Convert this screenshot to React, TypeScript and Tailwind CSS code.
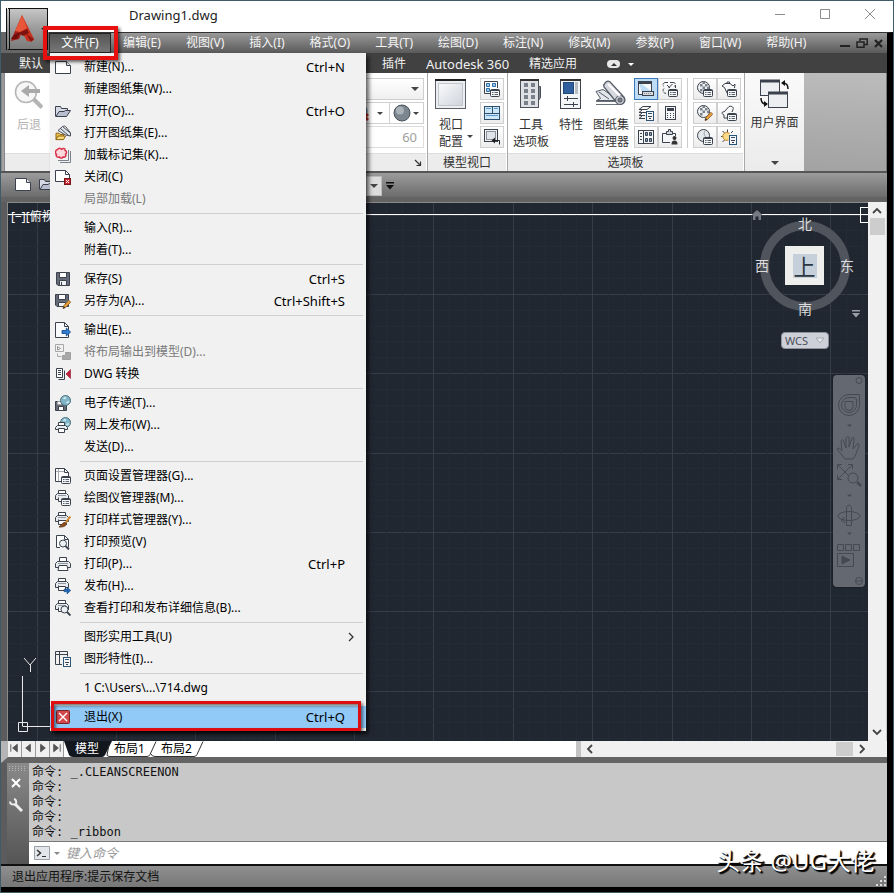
import React from 'react';

type IconProps = { className?: string };

interface SvgProps extends IconProps {
  size?: number;
  children: React.ReactNode;
}

const Svg: React.FC<SvgProps> = ({ size = 16, className = '', children }) => (
  <svg
    viewBox={`0 0 ${size} ${size}`}
    width={size}
    height={size}
    fill="none"
    stroke="#3b424d"
    strokeWidth="1"
    className={`shrink-0 ${className}`}
    aria-hidden="true"
  >
    {children}
  </svg>
);

/* small pieces shared by several icons */

const ListBadge = () => (
  <g>
    <rect x="6.5" y="8.5" width="9" height="7" rx="1" fill="#f4f6f8" />
    <path d="M6.500 9.500h9" />
    <path d="M8 11.500h1.500M10.500 11.500h3.500M8 13.500h1.500M10.500 13.500h3.500" stroke="#5b6470" />
  </g>
);

const CalcBadge = () => (
  <g>
    <rect x="8.500" y="6.500" width="7" height="9" fill="#f4f6f8" stroke="#2d5578" />
    <path d="M10 8.500h4" stroke="#2d5578" />
    <path d="M10 11.500h4M11 13.500h2" />
  </g>
);

const Pencil = () => (
  <g>
    <path d="M13.800 7.300l1.900 1.900-5.300 5.400-2.400.9.700-2.700z" fill="#eda43c" stroke="#8a5a22" strokeWidth="0.9" />
    <path d="M8 15.500l.7-2.600 1.700 1.800z" fill="#333" stroke="none" />
  </g>
);

const PrinterBody = () => (
  <g>
    <path d="M4.500 5.500v-4h7v4" fill="#fff" />
    <path d="M2.500 5.500h11l2 2v4H.5v-4z" fill="#e9ecef" />
    <path d="M3 7.500h10" stroke="#9298a2" />
    <path d="M4 9.500h8l1 5H3z" fill="#fff" />
  </g>
);

const SmallPrinter = () => (
  <g>
    <path d="M3.500 3.500v-3h7v3" fill="#fff" />
    <path d="M2.500 3.500h9l2 2v4H.5v-4z" fill="#e9ecef" />
    <path d="M3 5.500h8" stroke="#9298a2" />
    <path d="M3.500 7.500v4h5" fill="#fff" />
  </g>
);

const Globe = ({ cx, cy, r }: { cx: number; cy: number; r: number }) => (
  <g>
    <circle cx={cx} cy={cy} r={r} fill="#7fb4c6" stroke="#4d6f7c" />
    <path d={`M${cx - 3} ${cy - 2}l2-2 2 1-1 2zM${cx} ${cy + 2}l3-2 1 2-2 1z`} fill="#c5e3ea" stroke="none" />
  </g>
);

/* file menu icons */

const NewIcon = () => (
  <Svg>
    <path d="M.5 2.500h11l4 4v8H.5z" fill="#fff" />
    <path d="M11.500 2.500v4h4" fill="#dfe3e8" />
  </Svg>
);

const OpenIcon = () => (
  <Svg>
    <path d="M.5 13.500v-10h5l1 2h6v3" fill="#d6dae4" />
    <path d="M1 13.500l3-5h5l1.500-1h5l-4 6z" fill="#b9bfce" />
  </Svg>
);

const OpenSetIcon = () => (
  <Svg>
    <path d="M3 5.500l4.500-4 8 6.500v3l-5-1z" fill="#dfe4ea" strokeWidth="0.9" />
    <path d="M5.500 3.500l8 7M8 1.500c1-.8 2-.5 3 .5l4.500 6" strokeWidth="0.9" />
    <path d="M1 14.500V8.200h3l1 1.200h3.500v1.600" fill="#f3c64b" stroke="#8b6214" />
    <path d="M1 14.600l2-3.600h7.500l-2 3.600z" fill="#fbdc78" stroke="#8b6214" />
  </Svg>
);

const MarkupIcon = () => (
  <Svg>
    <path d="M5 15.500h10.500V4M3 13.500h10.500V3" stroke="#7b808a" />
    <path
      d="M2.500 2.500c1.500-2 3-1.500 4-.2 1.400-1.500 3.800-1 3.600 1.200 2 .5 1.600 3 .4 3.700 1 1.700-.4 3.500-2.400 2.800-1 1.600-3 1.400-3.600 0C2.500 10.700.500 9.500 1.500 7.500 0 6.800 0 3 2.500 2.500z"
      fill="#fbd8dc"
      stroke="#d9324a"
      strokeWidth="1.5"
    />
  </Svg>
);

const CloseFileIcon = () => (
  <Svg>
    <path d="M9 12.500H.5v-11h10l4 4V9" fill="#fff" />
    <path d="M10.500 1.500v4h4" />
    <rect x="9.500" y="9.500" width="6" height="6" fill="#c02a30" stroke="#7a1519" />
    <path d="M11 11l3 3M14 11l-3 3" stroke="#fff" />
  </Svg>
);

const SaveIcon = () => (
  <Svg>
    <path d="M1.500 1.500h13v13H3L1.500 13z" fill="#646b76" />
    <path d="M4.500 1.500h7v5h-7z" fill="#fff" />
    <path d="M4.500 9.500h7v5h-7z" fill="#eef0f2" />
    <path d="M6.500 11v3" />
  </Svg>
);

const SaveAsIcon = () => (
  <Svg>
    <path d="M.5 1.500h13v12H2L.5 12z" fill="#646b76" />
    <path d="M3.500 1.500h7v5h-7z" fill="#fff" />
    <path d="M3.500 9.500h7v4h-7z" fill="#eef0f2" />
    <Pencil />
  </Svg>
);

const ExportIcon = () => (
  <Svg>
    <path d="M.5.5h9l4 4v11H.5z" fill="#f8fafc" />
    <path d="M9.500.5v4h4" />
    <path d="M7 8.500h4.300V6l4.300 4-4.300 4v-2.500H7z" fill="#2d7dd2" stroke="#1d4e8f" strokeWidth="0.9" />
  </Svg>
);

const LayoutExportIcon = () => (
  <Svg>
    <path d="M.5.500h8v7h-8z" stroke="#a8a8a8" />
    <path d="M2.500 2.500l3 2-3 1.500z" stroke="#999" />
    <path d="M2.500 9.500v3h4" stroke="#a8a8a8" />
    <path d="M10.500 8.500h5v7h-8v-4h3z" fill="#a9a9a9" stroke="#a0a0a0" />
  </Svg>
);

const DwgIcon = () => (
  <Svg>
    <path d="M1.500 2.500h6v9h-6z" fill="#fff" />
    <path d="M3 4.500h3M3 6.500h3M3 8.500h3" />
    <path d="M3.500 13.500h6v-9" />
    <path d="M15.500 3.500v9l-4.500-4.500z" fill="#c3203d" stroke="#8b1b30" strokeWidth="0.6" />
  </Svg>
);

const TransmitIcon = () => (
  <Svg>
    <path d="M.5 6.500h11v9H.5z" fill="#656c77" />
    <path d="M2.500 6.500h4v3h-4z" fill="#f5f5f5" stroke="none" />
    <path d="M3.500 11.500h5v4h-5z" fill="#fff" />
    <Globe cx={10.5} cy={5.5} r={5} />
  </Svg>
);

const WebPublishIcon = () => (
  <Svg>
    <Globe cx={10.5} cy={5.500} r={5} />
    <path d="M3.500 8.500v-3h6v3" fill="#fff" />
    <path d="M2.500 8.500h8l2 2v2H.5v-2z" fill="#e9ecef" />
    <path d="M3.500 11.500h6v4h-6z" fill="#fff" />
  </Svg>
);

const PageSetupIcon = () => (
  <Svg>
    <path d="M6 13.500H.5V.5h9l4 4V8" fill="#fff" />
    <path d="M9.500.5v4h4" />
    <path d="M3.500 1v12M1 3.500h8" stroke="#a6abb3" />
    <ListBadge />
  </Svg>
);

const PlotterIcon = () => (
  <Svg>
    <SmallPrinter />
    <ListBadge />
  </Svg>
);

const PlotStyleIcon = () => (
  <Svg>
    <SmallPrinter />
    <path d="M3.500 8.500h8v4h-8z" fill="#fff" />
    <path d="M15.300 4.500l-5 6.500" stroke="#d98b2c" strokeWidth="2" />
    <path d="M9.800 10.300c-2 .2-3 2.200-5.800 4.800 3.500 0 6.800-.5 7.400-3z" fill="#8a4f22" stroke="#5c3314" strokeWidth="0.8" />
  </Svg>
);

const PreviewIcon = () => (
  <Svg>
    <path d="M5 13.500H1.500v-12h8l4 4v8" fill="#fff" />
    <path d="M9.500 1.500v4h4" />
    <circle cx="8" cy="9.500" r="3.500" fill="#eef1f4" />
    <path d="M10.500 12l3.500 3.500" strokeWidth="1.8" />
  </Svg>
);

const PrintIcon = () => (
  <Svg>
    <PrinterBody />
  </Svg>
);

const PublishIcon = () => (
  <Svg>
    <SmallPrinter />
    <path d="M3.500 8.500h7v4h-7z" fill="#fff" />
    <path d="M9 11.300h3V9l3.700 3.500L12 16v-2.300H9z" fill="#1f66b5" stroke="#17497f" strokeWidth="0.6" />
  </Svg>
);

const PlotDetailIcon = () => (
  <Svg>
    <SmallPrinter />
    <circle cx="9.500" cy="9.500" r="3.500" fill="#eef1f4" />
    <path d="M12 12l3.500 3.500" strokeWidth="1.8" />
  </Svg>
);

const DrawingPropsIcon = () => (
  <Svg>
    <path d="M7 13.500H.5v-13h12v5M.5 3.500h12M4.500.500v13" />
    <CalcBadge />
  </Svg>
);

const ExitIcon = () => (
  <Svg>
    <rect x="1.500" y="1.500" width="13" height="13" rx="1" fill="#d2484b" stroke="#7d2427" />
    <path d="M4 4l8 8M12 4l-8 8" stroke="#fff" strokeWidth="1.4" />
  </Svg>
);

/* ribbon icons */

const BackIcon = () => (
  <svg viewBox="0 0 32 32" width="32" height="32" fill="none" stroke="#b4b4b4" className="shrink-0" aria-hidden="true">
    <circle cx="13" cy="14" r="10.5" strokeWidth="1.5" fill="#f6f6f6" />
    <path d="M8 13l8-6v4h11v4H16v4z" fill="#a9a9a9" stroke="none" />
    <path d="M20.500 21l8.500 8.500" strokeWidth="4" />
  </svg>
);

const ViewportIcon = () => (
  <svg viewBox="0 0 32 32" width="32" height="32" aria-hidden="true">
    <defs>
      <linearGradient id="pane" x1="0" y1="0" x2="1" y2="1">
        <stop offset="0" stopColor="#fafbfc" />
        <stop offset="1" stopColor="#cfd3da" />
      </linearGradient>
    </defs>
    <rect x=".5" y="1.500" width="30" height="29" fill="#eceef1" stroke="#5b6069" />
    <path d="M0 2h31" stroke="#222" strokeWidth="2" />
    <rect x="3.500" y="5.500" width="24" height="22" fill="url(#pane)" stroke="#c3c7ce" />
  </svg>
);

const ToolPaletteIcon = () => (
  <svg viewBox="0 0 32 32" width="32" height="32" aria-hidden="true">
    <rect x="5.500" y="1.500" width="18" height="28" fill="#dfe1e5" stroke="#4b5059" />
    <path d="M5 2h19" stroke="#333" strokeWidth="2" />
    <path d="M23.500 8.500h2v11l-2 3z" fill="#7d838d" stroke="#4b5059" />
    {[5, 11, 17, 23].map((y) => (
      <g key={y} fill="#7a808a">
        <rect x="9" y={y} width="4" height="4" />
        <rect x="16" y={y} width="4" height="4" />
      </g>
    ))}
  </svg>
);

const PropertiesIcon = () => (
  <svg viewBox="0 0 32 32" width="32" height="32" aria-hidden="true">
    <rect x="5.500" y="1.500" width="20" height="29" fill="#f4f6f8" stroke="#3b424d" />
    <path d="M5 2h21" stroke="#333" strokeWidth="2" />
    <rect x="8.500" y="4.500" width="10" height="11" fill="#2f5f9e" stroke="#23487a" />
    <rect x="20" y="4" width="3" height="12" fill="#b9bec6" />
    <path d="M9 20.500h14M9 26.500h14M12.500 18v5M18.500 24v5" stroke="#3b424d" />
  </svg>
);

const SheetSetIcon = () => (
  <svg viewBox="0 0 32 32" width="32" height="32" fill="none" stroke="#555b66" aria-hidden="true">
    <path d="M1 26.500h23M1 23.500h22" stroke="#6c727c" />
    <path d="M1 13.500l7-2 16 11H1.500l4-2z" fill="#e4e7eb" />
    <path d="M4 14l10 7" />
    <path d="M10 5c2-3 5-2 6 0l13 14c3 6-3 9-7 6L9 9c-1-2 0-3 1-4z" fill="#d5d9df" strokeWidth="1.3" />
    <circle cx="25" cy="22" r="4.5" fill="#bfc4cc" />
    <circle cx="25" cy="22" r="2" fill="#7c828c" />
    <path d="M13 6l12 12" stroke="#fff" strokeWidth="2" />
  </svg>
);

const UserInterfaceIcon = () => (
  <svg viewBox="0 0 32 32" width="32" height="32" fill="none" aria-hidden="true">
    <g stroke="#3b424d">
      <rect x="1.500" y="2.500" width="19" height="15" fill="#eceef2" />
      <path d="M1 3h20" strokeWidth="3" />
      <rect x="9.500" y="14.500" width="19" height="15" fill="#eceef2" />
      <path d="M9 15h20" strokeWidth="3" />
    </g>
    <g stroke="#111" strokeWidth="1.5">
      <path d="M29 11c0-4-2-6-5-6" />
      <path d="M2 20c0 4 2 6 5 6" />
    </g>
    <path d="M22 5l4-3v6zM9 26l-4-3v6z" fill="#111" />
  </svg>
);

const AcadIcon = () => (
  <svg viewBox="0 0 26 28" width="26" height="28" className="shrink-0" aria-hidden="true">
    <path d="M12 0L2 23l-1 3 8-2 3-7z" fill="#a11d16" />
    <path d="M12 0l3 6 9 18c0 2-3 3-7 2l-5-9z" fill="#c8301d" />
    <path d="M12 0l5 13-7 4-5-1z" fill="#e8563a" />
    <path d="M9 18l8-4 2 4-6 3z" fill="#7c110e" />
    <path d="M1 24c3-5 6-6 9-6l-3 6z" fill="#6e0f0c" />
    <path d="M16 19l8 5-3 3z" fill="#8e1812" />
  </svg>
);

const ViewManagerSm = () => (
  <Svg>
    <path d="M6 12.500H.5V.5h13V7" fill="#fff" />
    <path d="M2.500 2.500h3v3h-3zM8.500 2.500h3v3h-3zM2.500 7.500h3v3h-3z" fill="#9ecbee" stroke="#2d6ea8" />
    <ListBadge />
  </Svg>
);

const ViewportSplitSm = () => (
  <Svg>
    <rect x=".5" y="1.500" width="15" height="13" fill="#cfe6f7" stroke="#2d4f6c" />
    <path d="M1 8.500h14M8.500 2v6" stroke="#2d4f6c" />
    <path d="M2 3.500h5M10 3.500h4M2 10.500h12" stroke="#5b9bd0" />
  </Svg>
);

const RestoreSm = () => (
  <Svg>
    <rect x=".5" y=".5" width="13" height="12" fill="#f0f1f3" />
    <rect x="2.500" y="2.500" width="9" height="8" fill="#e0e3e7" stroke="#8c929c" />
    <path d="M15.500 15.500v-4H8.500" stroke="#222" />
    <path d="M11 8.500l-3.500 3 3.500 3z" fill="#222" stroke="none" />
  </Svg>
);

const CommandLineSm = () => (
  <Svg>
    <path d="M.5.5h13v10M.5.5v13h4" fill="#f5f7f9" />
    <path d="M0 1.500h14" strokeWidth="3" />
    <rect x="4.500" y="10.500" width="11" height="4" fill="#d8dbe0" />
    <path d="M6 12.500h8" stroke="#858b95" strokeDasharray="1 1" />
  </Svg>
);

const CloudListSm = () => (
  <Svg>
    <path d="M3 1.500h3M8 1.500h3M13.500 4v3M6.500 7l4-4M5 4l3 3" />
    <path d="M3 1.500C0 2.500 1 5 2 5.500M11 1.500c3 0 3 3 1.500 4M2 7.500c-2 2-1 5 3 5" strokeDasharray="3 1" />
    <ListBadge />
  </Svg>
);

const LayerSm = () => (
  <Svg>
    <path d="M5 1.500h8l-4 3H1zM8 7.500H1l3-2.500M7 10.500H1l3-2.500M7 13.500H1l3-2.500" />
    <CalcBadge />
  </Svg>
);

const CalculatorSm = () => (
  <Svg>
    <rect x="3.500" y="1.500" width="10" height="13" fill="#f4f6f8" />
    <rect x="5" y="3" width="7" height="3" fill="#3b424d" stroke="none" />
    <path d="M5 8.500h7M5 10.500h7M5 12.500h7" strokeDasharray="1 2" />
  </Svg>
);

const DesignCenterSm = () => (
  <Svg>
    <rect x=".5" y="1.500" width="15" height="13" fill="#f4f6f8" />
    <path d="M5.500 1.500v13M2 4.500h2M2 7.500h2M2 10.500h2" />
    <path d="M7.500 3.500h2v3h-2zM11.500 3.500h2v3h-2zM7.500 9.500h2v3h-2zM11.500 9.500h2v3h-2z" fill="#77a2c8" />
  </Svg>
);

const ClipboardUserSm = () => (
  <Svg>
    <path d="M8 13.500H.5v-9h13V7" fill="#f4f6f8" />
    <path d="M4.500 5.500v-3h2v-2h2v2h2v3z" fill="#d2d5da" />
    <circle cx="12.500" cy="9" r="2" fill="#333" stroke="none" />
    <path d="M9.500 15.500c0-3 1-4 3-4s3 1 3 4z" fill="#333" stroke="none" />
  </Svg>
);

const Sphere = () => (
  <g>
    <circle cx="6.500" cy="6.500" r="6" fill="#eef0f2" />
    <path d="M3 3h2.500v2.500H3zM8 3h2.500v2.500H8zM5.500 5.500H8V8H5.500zM3 8h2.500v2.500H3zM10 6h2v2h-2zM5.500 1H8v2H5.500z" fill="#7b828c" stroke="none" />
  </g>
);

const MaterialListSm = () => (
  <Svg>
    <Sphere />
    <ListBadge />
  </Svg>
);

const MaterialEditSm = () => (
  <Svg>
    <Sphere />
    <Pencil />
  </Svg>
);

const RenderSettingsSm = () => (
  <Svg>
    <circle cx="6.500" cy="6.500" r="6" fill="#e4e7ea" />
    <path d="M9 1c-4 3-1 8 3 8" stroke="#9da3ac" />
    <ListBadge />
  </Svg>
);

const VisualStyleSm = () => (
  <Svg>
    <path d="M6 12L3.500 6.500 1 5l3-2.500h5L12 5l2-2-.5 4M6 2.500V1h2.500v1.500" />
    <ListBadge />
  </Svg>
);

const CameraSm = () => (
  <Svg>
    <path d="M3 10C0 9 1 6 3 7l5-5.500c3-1 5 1 4 3L11 7M3 10v3h3" />
    <ListBadge />
  </Svg>
);

const SunSm = () => (
  <Svg>
    <path d="M6.500 3V.5M3.500 4l-2-2M2.500 7.500H0M3.500 11l-2 2M10 4l2-2" stroke="#444" />
    <path d="M7.500 11A4 4 0 118.500 4.500" fill="#f9d98c" stroke="#c7892a" />
    <CalcBadge />
  </Svg>
);

const Caret = ({ className = 'border-t-[#444]' }: IconProps) => (
  <span className={`inline-block h-0 w-0 border-x-[4px] border-t-[4px] border-x-transparent ${className}`} />
);

const CaretSm = ({ className = 'border-t-[#444]' }: IconProps) => (
  <span className={`inline-block h-0 w-0 border-x-[3px] border-t-[3px] border-x-transparent ${className}`} />
);

/* menu data */

interface MenuEntry {
  label: string;
  icon?: React.FC;
  shortcut?: string;
  disabled?: boolean;
  submenu?: boolean;
  active?: boolean;
}

const FILE_MENU: MenuEntry[][] = [
  [
    { label: '新建(N)...', icon: NewIcon, shortcut: 'Ctrl+N' },
    { label: '新建图纸集(W)...' },
    { label: '打开(O)...', icon: OpenIcon, shortcut: 'Ctrl+O' },
    { label: '打开图纸集(E)...', icon: OpenSetIcon },
    { label: '加载标记集(K)...', icon: MarkupIcon },
    { label: '关闭(C)', icon: CloseFileIcon },
    { label: '局部加载(L)', disabled: true },
  ],
  [{ label: '输入(R)...' }, { label: '附着(T)...' }],
  [
    { label: '保存(S)', icon: SaveIcon, shortcut: 'Ctrl+S' },
    { label: '另存为(A)...', icon: SaveAsIcon, shortcut: 'Ctrl+Shift+S' },
  ],
  [
    { label: '输出(E)...', icon: ExportIcon },
    { label: '将布局输出到模型(D)...', icon: LayoutExportIcon, disabled: true },
    { label: 'DWG 转换', icon: DwgIcon },
  ],
  [
    { label: '电子传递(T)...', icon: TransmitIcon },
    { label: '网上发布(W)...', icon: WebPublishIcon },
    { label: '发送(D)...' },
  ],
  [
    { label: '页面设置管理器(G)...', icon: PageSetupIcon },
    { label: '绘图仪管理器(M)...', icon: PlotterIcon },
    { label: '打印样式管理器(Y)...', icon: PlotStyleIcon },
    { label: '打印预览(V)', icon: PreviewIcon },
    { label: '打印(P)...', icon: PrintIcon, shortcut: 'Ctrl+P' },
    { label: '发布(H)...', icon: PublishIcon },
    { label: '查看打印和发布详细信息(B)...', icon: PlotDetailIcon },
  ],
  [
    { label: '图形实用工具(U)', submenu: true },
    { label: '图形特性(I)...', icon: DrawingPropsIcon },
  ],
  [{ label: '1 C:\\Users\\...\\714.dwg' }],
  [{ label: '退出(X)', icon: ExitIcon, shortcut: 'Ctrl+Q', active: true }],
];

const MENUS = ['编辑(E)', '视图(V)', '插入(I)', '格式(O)', '工具(T)', '绘图(D)', '标注(N)', '修改(M)', '参数(P)', '窗口(W)', '帮助(H)'];

const FileMenu = () => (
  <div className="absolute left-px top-full z-20 w-[316px] bg-[#f1f1f1] py-[3px] text-black shadow-[3px_3px_4px_rgba(0,0,0,0.6)]">
    {FILE_MENU.map((group, i) => (
      <React.Fragment key={i}>
        {i > 0 && i < FILE_MENU.length - 1 && (
          <div className="flex h-[7px] items-center pl-[30px] pr-[3px]">
            <div className="h-px w-full bg-[#d0d0d0]" />
          </div>
        )}
        {i === FILE_MENU.length - 1 && <div className="h-[7px]" />}
        {group.map(({ label, icon: Icon, shortcut, disabled, submenu, active }) => (
          <button
            key={label}
            disabled={disabled}
            className={`relative flex h-[22px] w-full items-center pl-[5px] text-left ${
              active ? 'bg-[#91c9f7]' : ''
            } ${disabled ? 'text-[#7a7a7a]' : ''} ${submenu || shortcut ? 'pr-[21px]' : 'pr-2'}`}
          >
            <span className="flex w-[29px] shrink-0">{Icon && <Icon />}</span>
            <span className="flex-1 whitespace-nowrap">{label}</span>
            {shortcut && <span className="text-[13px]">{shortcut}</span>}
            {submenu && (
              <svg viewBox="0 0 8 10" width="8" height="10" fill="none" stroke="#333" strokeWidth="1.3" className="-mr-2.5" aria-hidden="true">
                <path d="M2 1l4 4-4 4" />
              </svg>
            )}
            {active && (
              <span className="absolute -bottom-[3px] -top-[5px] left-px right-[5px] border-[3px] border-[#dd0e12] shadow-[2px_2px_3px_rgba(0,0,0,0.5),inset_2px_2px_3px_rgba(0,0,0,0.5)]" />
            )}
          </button>
        ))}
      </React.Fragment>
    ))}
  </div>
);

const TitleBar = () => (
  <div className="flex h-[31px] items-center bg-white pl-20">
    <h1 className="flex-1 pb-1 text-[13px] text-[#222]">Drawing1.dwg</h1>
    <div className="flex gap-[21px] pb-1.5 pr-[11px]">
      <button aria-label="最小化" className="flex w-6 justify-center">
        <svg viewBox="0 0 12 12" width="12" height="12" fill="none" stroke="#8c8c8c">
          <path d="M1 6.500h10" />
        </svg>
      </button>
      <button aria-label="最大化" className="flex w-6 justify-center">
        <svg viewBox="0 0 12 12" width="12" height="12" fill="none" stroke="#8c8c8c">
          <path d="M1.500 1.500h9v9h-9z" />
        </svg>
      </button>
      <button aria-label="关闭" className="flex w-6 justify-center">
        <svg viewBox="0 0 12 12" width="12" height="12" fill="none" stroke="#8c8c8c">
          <path d="M1 1l10 10M11 1L1 11" />
        </svg>
      </button>
    </div>
  </div>
);

const MenuBar = () => (
  <nav className="flex h-[21px] items-stretch border-r-[6px] border-t border-black border-t-[#333] bg-gradient-to-b from-[#9a9a9a] to-[#5a5a5a] text-[#f4f4f4]">
    <div className="relative mr-3">
      <button className="h-full w-[62px] border border-[#222] bg-gradient-to-b from-[#555] to-[#777] text-white">文件(F)</button>
      <FileMenu />
      <span className="absolute -bottom-[7px] -left-1.5 -right-[7px] -top-[7px] z-30 border-4 border-[#e80f0f] shadow-[2px_2px_3px_rgba(0,0,0,0.6)]" />
    </div>
    <div className="flex flex-1 gap-[25px]">
      {MENUS.map((m) => (
        <button key={m} className="whitespace-nowrap">
          {m}
        </button>
      ))}
    </div>
    <div className="flex items-center gap-1.5 pr-1">
      <svg viewBox="0 0 10 10" width="10" height="10" aria-hidden="true">
        <path d="M0 7h10v2H0z" fill="#222" />
      </svg>
      <svg viewBox="0 0 12 10" width="12" height="10" fill="none" stroke="#222" strokeWidth="1.5" aria-hidden="true">
        <path d="M4 3V1h7.200v5.500H8M1 4h7v5.200H1z" />
      </svg>
      <svg viewBox="0 0 9 9" width="9" height="9" stroke="#222" strokeWidth="2.2" aria-hidden="true">
        <path d="M1 1l7 7M8 1L1 8" />
      </svg>
    </div>
  </nav>
);

const Header = () => (
  <header className="flex">
    <div className="flex w-12 shrink-0 flex-col bg-gradient-to-b from-white from-60% to-[#666] to-60% pl-[5px] pr-px pt-[7px]">
      <button
        aria-label="应用程序菜单"
        className="flex h-[42px] items-center justify-between border border-l-4 border-double border-[#111] bg-gradient-to-b from-[#c6c6c6] via-[#9a9a9a] to-[#7b7b7b]"
      >
        <AcadIcon />
        <CaretSm className="border-t-[#222]" />
      </button>
    </div>
    <div className="min-w-0 flex-1">
      <TitleBar />
      <MenuBar />
    </div>
  </header>
);

const RibbonTabs = () => (
  <div className="flex h-5 items-center gap-5 bg-[#414141] pt-0.5 text-[#f0f0f0]">
    <button className="w-[361px] pl-[18px] text-left">默认</button>
    <button>插件</button>
    <button className="whitespace-nowrap text-[13px]">Autodesk 360</button>
    <button>精选应用</button>
    <button aria-label="最小化功能区" className="ml-2.5 flex items-center gap-2">
      <span className="flex h-2 w-[13px] items-center justify-center rounded-sm bg-[#e8e8e8]">
        <span className="h-0 w-0 border-x-[3px] border-b-[3px] border-x-transparent border-b-[#333]" />
      </span>
      <CaretSm className="border-t-white" />
    </button>
  </div>
);

interface PanelProps {
  title?: React.ReactNode;
  className?: string;
  children: React.ReactNode;
}

const Panel: React.FC<PanelProps> = ({ title, className = '', children }) => (
  <section className={`flex flex-col border-r border-[#a9a9a9] bg-white ${className}`}>
    <div className="flex h-20 px-[3px] pt-[5px]">{children}</div>
    <div className="mr-px flex h-[18px] items-center justify-center border-t border-[#ddd] bg-[#ececec] text-[#333]">{title}</div>
  </section>
);

const SmallButton: React.FC<{ icon: React.FC; active?: boolean }> = ({ icon: Icon, active }) => (
  <button
    className={`flex h-[22px] w-6 items-center justify-center border ${
      active ? 'border-[#3a78c0] bg-[#bfdcf6]' : 'border-[#cfcfcf] bg-gradient-to-b from-white to-[#ececec]'
    }`}
  >
    <Icon />
  </button>
);

const BigButton: React.FC<{ icon: React.FC; lines: string[]; caret?: boolean }> = ({ icon: Icon, lines, caret }) => (
  <button className="relative flex w-10 flex-col items-center whitespace-nowrap leading-[17px] text-[#333]">
    <Icon />
    <span className="pt-1.5">
      {lines.map((l) => (
        <span key={l} className="block">
          {l}
        </span>
      ))}
    </span>
    {caret && <CaretSm className="absolute -right-0.5 bottom-[15px] border-t-[#444]" />}
  </button>
);

const Ribbon = () => (
  <div className="flex h-[98px] border-l-4 border-double border-[#888] bg-gradient-to-br from-[#8c8c8c] to-[#a4a4a4]">
    <Panel
      className="w-[423px]"
      title={
        <svg viewBox="0 0 8 8" width="8" height="8" fill="none" stroke="#333" strokeWidth="1.2" className="ml-auto mr-1" aria-hidden="true">
          <path d="M1 1l5 5M6.500 2.500v4h-4" />
        </svg>
      }
    >
      <button disabled className="ml-[5px] flex w-8 flex-col items-center gap-[7px] text-[#b4b4b4]">
        <BackIcon />
        <span>后退</span>
      </button>
      <div className="ml-auto flex w-[120px] flex-col gap-0.5">
        <button aria-label="视图" className="flex h-[22px] items-center justify-end border border-[#cfcfcf] bg-gradient-to-b from-white to-[#efefef] pr-1">
          <Caret />
        </button>
        <div className="flex h-[22px]">
          <button aria-label="隐藏" className="flex flex-1 items-center justify-end gap-2 border border-[#cfcfcf] pr-1.5">
            <svg viewBox="0 0 16 16" width="16" height="16" aria-hidden="true">
              <circle cx="8" cy="6" r="6" fill="#a8cfe6" stroke="#3b6f96" />
              <path d="M9 9l6 6M15 9l-6 6" stroke="#c9281e" strokeWidth="2.5" />
            </svg>
            <CaretSm />
          </button>
          <button aria-label="视觉样式" className="-ml-px flex w-[35px] items-center justify-between border border-[#cfcfcf] pl-[3px] pr-1">
            <svg viewBox="0 0 18 18" width="18" height="18" aria-hidden="true">
              <circle cx="9" cy="9" r="8" fill="#7c868e" stroke="#4a525a" />
              <circle cx="7" cy="6.500" r="4" fill="#a9b2b9" />
            </svg>
            <CaretSm />
          </button>
        </div>
        <input
          aria-label="透明度"
          disabled
          defaultValue="60"
          className="h-[22px] w-full border border-[#ddd] bg-white pr-1.5 text-right text-[13px] text-[#a0a0a0]"
        />
      </div>
    </Panel>
    <Panel title="模型视口" className="w-20">
      <BigButton icon={ViewportIcon} lines={['视口', '配置']} caret />
      <div className="ml-auto flex flex-col gap-0.5">
        <SmallButton icon={ViewManagerSm} />
        <SmallButton icon={ViewportSplitSm} />
        <SmallButton icon={RestoreSm} />
      </div>
    </Panel>
    <Panel title="选项板" className="w-[237px]">
      <BigButton icon={ToolPaletteIcon} lines={['工具', '选项板']} />
      <BigButton icon={PropertiesIcon} lines={['特性']} />
      <BigButton icon={SheetSetIcon} lines={['图纸集', '管理器']} />
      <div className="ml-auto grid grid-cols-2 content-start gap-y-0.5">
        <SmallButton icon={CommandLineSm} active />
        <SmallButton icon={CloudListSm} />
        <SmallButton icon={LayerSm} />
        <SmallButton icon={CalculatorSm} />
        <SmallButton icon={DesignCenterSm} />
        <SmallButton icon={ClipboardUserSm} />
      </div>
      <div className="mx-[5px] h-[70px] w-px bg-[#ccc]" />
      <div className="grid grid-cols-2 content-start gap-y-0.5">
        <SmallButton icon={MaterialListSm} />
        <SmallButton icon={VisualStyleSm} />
        <SmallButton icon={MaterialEditSm} />
        <SmallButton icon={CameraSm} />
        <SmallButton icon={RenderSettingsSm} />
        <SmallButton icon={SunSm} />
      </div>
    </Panel>
    <button className="flex w-[59px] flex-col items-center whitespace-nowrap bg-gradient-to-b from-[#fafafa] to-[#ebebeb] pb-1.5 pt-[5px] text-[#333]">
      <UserInterfaceIcon />
      <span className="mt-[5px]">用户界面</span>
      <Caret className="mt-auto border-t-[#444]" />
    </button>
    <div className="flex-1 border-r border-[#777] bg-gradient-to-b from-white/35 to-transparent" />
  </div>
);

const QuickBar = () => (
  <div className="flex h-[31px] items-start gap-2 border-y-2 border-b-[5px] border-b-[#636363] border-t-[#555] bg-gradient-to-b from-[#9c9c9c] to-[#6c6c6c] pl-[14px] pt-px">
    <div className="flex h-5 w-[343px] items-center gap-2">
      <NewIcon />
      <OpenIcon />
    </div>
    <div className="flex h-full items-center gap-1">
      <button aria-label="工作空间" className="flex h-5 w-4 items-center justify-center border border-[#bbb] bg-[#dcdcdc]">
        <Caret />
      </button>
      <svg viewBox="0 0 8 8" width="8" height="8" aria-hidden="true">
        <path d="M0 0h8v1.500H0zM0 3h8L4 7.500z" fill="#111" />
      </svg>
    </div>
  </div>
);

const STEP = 79.35;

// grid of the drawing area: every fifth line is a major one
const Grid = () => {
  const lines = Array.from({ length: 140 }, (_, i) => i - 2);
  return (
    <svg className="absolute inset-0 h-full w-full" aria-hidden="true" shapeRendering="crispEdges">
      {lines.map((i) => {
        const major = i % 5 === 0;
        const x = Math.round(28.7 + (i * STEP) / 5) + 0.5;
        const y = Math.round(11.5 + (i * STEP) / 5) + 0.5;
        return (
          <g key={i} stroke={major ? '#363d48' : '#252b36'}>
            <path d={`M${x} 0v2000`} />
            <path d={`M0 ${y}h3000`} />
          </g>
        );
      })}
      <path d="M0 11.500h3000" stroke="#fff" />
    </svg>
  );
};

const UcsIcon = () => (
  <svg viewBox="0 0 60 80" width="60" height="80" fill="none" stroke="#e8e8e8" className="absolute bottom-2 left-2" aria-hidden="true">
    <path d="M8 5l6 7 6-7M14.500 12v7" />
    <path d="M6.500 23v50M6.500 73.500H60" />
    <path d="M2.500 69.500h9v9h-9z" />
  </svg>
);

const ViewCube = () => (
  <div className="absolute right-3 top-[13px] h-[102px] w-[102px] text-center text-[14px] leading-[14px] text-[#dcdcdc]">
    <svg viewBox="0 0 102 102" width="102" height="102" fill="none" className="absolute inset-0" aria-hidden="true">
      <circle cx="51" cy="50" r="40.5" stroke="#50545d" strokeWidth="9" />
    </svg>
    <span className="absolute inset-x-0 top-px">北</span>
    <span className="absolute inset-x-0 bottom-0.5">南</span>
    <span className="absolute left-px top-[43px]">西</span>
    <span className="absolute right-0.5 top-[43px]">东</span>
    <button className="absolute left-[31px] top-[30px] flex h-[39px] w-[39px] items-center justify-center bg-[#eeeeec] text-[22px] leading-6 text-[#2d3742]">
      <span className="h-6 w-6 bg-[#c6d0db]">上</span>
    </button>
  </div>
);

const NavBar = () => (
  <div className="absolute right-[3px] top-[172px] h-[212px] w-8 rounded bg-[#646871] shadow-[0_0_2px_#111]">
    <svg viewBox="0 0 32 212" width="32" height="212" fill="none" stroke="#454951" aria-hidden="true">
      <circle cx="26" cy="5.500" r="3" />
      <path d="M16 19.500h10.500V30A10.500 10.500 0 1116 19.500z" />
      <path d="M16 22.500a7.500 7.500 0 107.500 7.500v-5q0-2.500-2.500-2.500z" />
      <path d="M12 26.500h8v5a4 4 0 01-8 0z" />
      <path d="M14 49.500h5l-2.500 2.500z" fill="#454951" stroke="none" />
      <path d="M12 84c-3-3-5-7-8-10 2-2 4 0 5 2l-1-10c1-2 3-1 3 1l2 6V63c1-2 3-2 3 0v9l3-9c1-1 3 0 2 2l-1 9 4-5c1-1 3 0 2 2-2 4-3 10-6 13z" />
      <path d="M5 90l14 14M19 90L5 104M4.500 94v-4.500H9M15 89.500h4.500V94M4.500 100v4.500H9" />
      <circle cx="20" cy="103" r="5" fill="#646871" />
      <path d="M24 107l4 4" strokeWidth="2.5" />
      <path d="M14 119.500h5l-2.500 2.500z" fill="#454951" stroke="none" />
      <path d="M13.500 150.500v-18q2.500-5 5 0v18z" />
      <ellipse cx="16" cy="141" rx="11" ry="4.5" />
      <path d="M12 142l-4 3 4 3" />
      <path d="M14 157.500h5l-2.500 2.500z" fill="#454951" stroke="none" />
      <path d="M4.500 169.500h6v6h-6zM12.500 169.500h6v6h-6zM20.500 169.500h6v6h-6zM4.500 178.500h16v13h-16z" />
      <path d="M9 181l8 4-8 4z" fill="#454951" />
      <circle cx="26" cy="206" r="3.5" />
      <path d="M23 206h6" />
    </svg>
  </div>
);

const Arrow = ({ d }: { d: string }) => (
  <svg viewBox="0 0 10 10" width="10" height="10" fill="none" stroke="#444" strokeWidth="1.8" aria-hidden="true">
    <path d={d} />
  </svg>
);

const DrawingArea = () => (
  <div className="flex flex-1 border-l-[6px] border-[#5c5c5c] bg-[#5c5c5c]">
    <main className="relative min-h-[400px] flex-1 overflow-hidden border-l border-t border-[#8a8a8a] bg-[#212731]">
      <Grid />
      <span className="absolute left-[3px] top-1.5 whitespace-nowrap text-white">[−][俯视</span>
      <span className="absolute -right-px top-1 h-4 w-[9px] border border-white" />
      <svg viewBox="0 0 12 12" width="12" height="12" className="absolute right-[105px] top-1.5" aria-hidden="true">
        <path d="M6 1l5.500 5H10v5H7.500V7.500h-3V11H2V6H.5z" fill="#767a82" />
      </svg>
      <ViewCube />
      <svg viewBox="0 0 10 8" width="10" height="8" className="absolute right-[7px] top-[107px]" aria-hidden="true">
        <path d="M1 0h8v1.500H1zM1 3h8L5 7.500z" fill="#9a9da3" />
      </svg>
      <button className="absolute right-[39px] top-[129px] flex h-[17px] w-12 items-center justify-between rounded border border-[#8f939c] bg-[#cdd0d9] px-[3px] text-[11px] text-[#4a4e57]">
        WCS
        <svg viewBox="0 0 10 7" width="10" height="7" fill="#e6e8ec" stroke="#a5a8b0" aria-hidden="true">
          <path d="M1 1h8L5 6z" />
        </svg>
      </button>
      <NavBar />
      <UcsIcon />
    </main>
    <div className="flex w-[19px] flex-col items-center border-r border-[#ccc] bg-[#f0f0f0] py-1">
      <Arrow d="M1 7l4-4 4 4" />
      <div className="mt-0.5 h-[17px] w-[15px] bg-[#cdcdcd]" />
      <div className="flex-1" />
      <Arrow d="M1 3l4 4 4-4" />
    </div>
  </div>
);

const LayoutTabs = () => (
  <div className="flex h-[22px] items-start border-b-[6px] border-l-[7px] border-b-[#646464] border-l-[#b5b5b5] bg-[#f0f0f0] pr-5 text-black">
    {['M3 3v8M10 3L5 7l5 4z', 'M9 3L4 7l5 4z', 'M5 3l5 4-5 4z', 'M11 3v8M4 3l5 4-5 4z'].map((d) => (
      <button key={d} className="flex h-4 w-[14px] justify-center border-r border-[#999]">
        <svg viewBox="0 0 14 14" width="14" height="14" fill="#555" stroke="#555">
          <path d={d} />
        </svg>
      </button>
    ))}
    <div className="relative flex h-4 w-[512px] items-center bg-white leading-4">
      <svg viewBox="0 0 140 16" width="140" height="16" className="absolute inset-0" fill="none" stroke="#333" aria-hidden="true">
        <path d="M0 0h48l-7 14q-1 2-3 2H9q-3 0-4-2z" fill="#12161d" stroke="none" />
        <path d="M45 4l-2 10q0 1.500 3 1.500h37q2 0 3-2l6-13M87 13q1 2.500 4 2.500h39q2 0 3-2l6-13" />
      </svg>
      <button className="relative ml-[11px] w-6 text-white">模型</button>
      <button className="relative ml-[15px]">布局1</button>
      <button className="relative ml-4">布局2</button>
    </div>
    <div className="h-4 w-[5px] bg-[#c4c4c4]" />
    <div className="flex h-4 flex-1 items-center pl-1">
      <Arrow d="M7 1L3 5l4 4" />
      <div className="ml-auto mr-1 h-[14px] w-[17px] bg-[#cdcdcd]" />
      <Arrow d="M3 1l4 4-4 4" />
    </div>
  </div>
);

const HISTORY = ['命令: _.CLEANSCREENON', '命令:', '命令:', '命令:', '命令: _ribbon'];

const CommandLine = () => (
  <div className="flex h-[101px] border-l-[6px] border-[#5c5c5c] bg-[#c8c8c8]">
    <div className="flex w-[22px] shrink-0 flex-col items-center gap-2.5 bg-gradient-to-b from-[#8a8a8a] to-[#555] pt-[3px]">
      <svg viewBox="0 0 20 6" width="20" height="6" stroke="#b5b5b5" strokeDasharray="1 2" aria-hidden="true">
        <path d="M1 .5h18M1 2.500h18M1 4.500h18" />
      </svg>
      <button aria-label="关闭命令行" className="-mt-1 pr-1">
        <svg viewBox="0 0 10 10" width="10" height="10" stroke="#fff" strokeWidth="2">
          <path d="M1 1l8 8M9 1L1 9" />
        </svg>
      </button>
      <button aria-label="自定义" className="pr-1">
        <svg viewBox="0 0 14 14" width="14" height="14" fill="none" stroke="#eee">
          <path d="M6 6l7 7" strokeWidth="3" />
          <path d="M5 1c3 1 3 5.500 0 5.500S1 5.500 1.200 3.500" strokeWidth="2" />
        </svg>
      </button>
    </div>
    <div className="flex min-w-0 flex-1 flex-col">
      <div className="h-[79px] border-b border-[#777] pl-[3px] pt-0.5 font-['DejaVu_Sans_Mono','Noto_Sans_CJK_SC',monospace] leading-[15px] text-[#111]">
        {HISTORY.map((line, i) => (
          <p key={i}>{line}</p>
        ))}
      </div>
      <label className="flex flex-1 items-center gap-1 bg-white pl-[5px]">
        <svg viewBox="0 0 16 14" width="16" height="14" fill="#e3e6ea" stroke="#9aa0a8" aria-hidden="true">
          <path d="M.5.5h15v13H.5z" />
          <path d="M3 4l3.500 3L3 10" fill="none" stroke="#333" strokeWidth="1.5" />
          <path d="M8 10.500h4" stroke="#333" />
        </svg>
        <CaretSm className="border-t-[#888]" />
        <input
          aria-label="键入命令"
          placeholder="键入命令"
          className="ml-0.5 min-w-0 flex-1 text-[13px] italic outline-none placeholder:text-[#999]"
        />
      </label>
    </div>
  </div>
);

const StatusBar = () => (
  <footer className="relative flex h-[23px] items-center border-t-2 border-[#111] bg-gradient-to-b from-[#909090] to-[#777] pl-[11px] text-[#111]">
    退出应用程序:提示保存文档
    <span className="absolute bottom-3 right-3 whitespace-nowrap text-[24px] leading-7 text-white [text-shadow:1px_1px_1px_#000,2px_2px_1px_#000]">
      头条 @UG大佬
    </span>
    <svg viewBox="0 0 12 12" width="12" height="12" fill="#ddd" className="absolute bottom-0 right-0" aria-hidden="true">
      <path d="M9 1h2v2H9zM5 5h2v2H5zM9 5h2v2H9zM1 9h2v2H1zM5 9h2v2H5zM9 9h2v2H9z" />
    </svg>
  </footer>
);

export default function App() {
  return (
    <div className="flex min-h-screen flex-col border border-[#3d5c68] bg-white font-['Noto_Sans','Noto_Sans_CJK_SC',sans-serif] text-[12px] leading-4">
      <Header />
      <div className="flex flex-1 flex-col border-b-[5px] border-r-[6px] border-black">
        <RibbonTabs />
        <Ribbon />
        <QuickBar />
        <DrawingArea />
        <LayoutTabs />
        <CommandLine />
        <StatusBar />
      </div>
    </div>
  );
}
